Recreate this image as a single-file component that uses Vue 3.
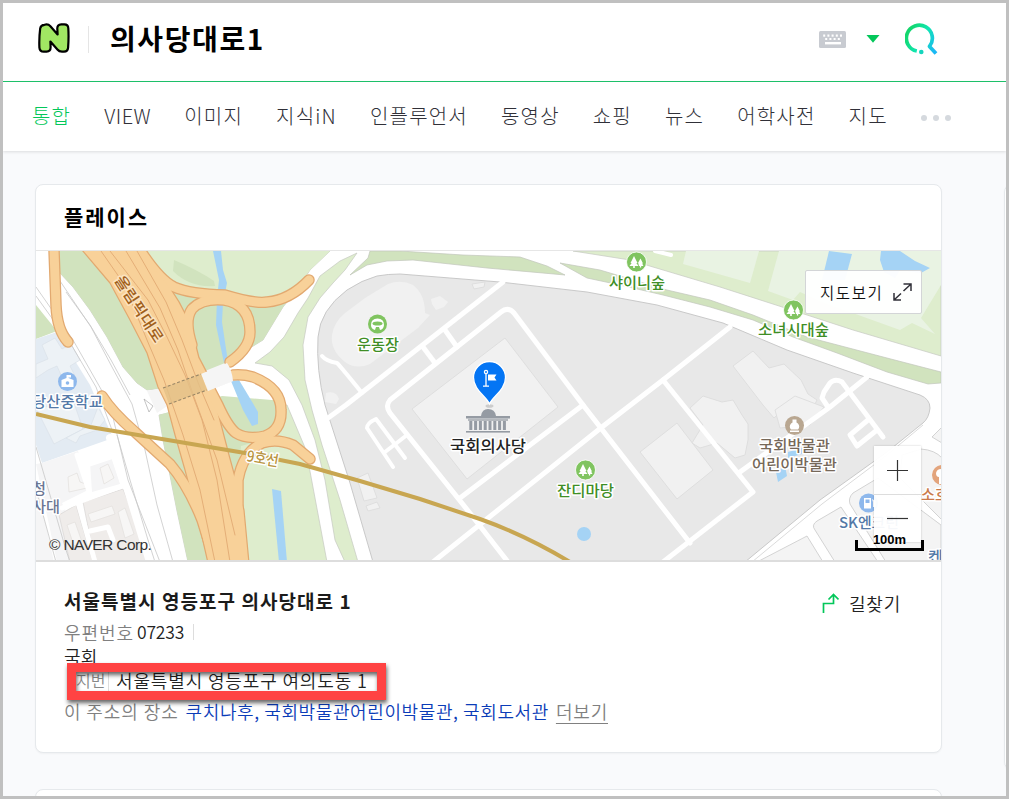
<!-- App.vue: 통합검색 결과 - 플레이스 카드 -->
<template>
  <div class="page">
    <header class="search-bar">
      <svg class="logo" width="34" height="32" viewBox="0 0 34 32">
        <path
          d="M6.5 1.8 C8.8 1 10.8 1.5 12.4 3.2 L19.6 11.4 L19.3 5.6 C19.2 2.8 20.8 1.4 23.2 1.3 L26 1.3 C28.8 1.2 30.2 2.6 30.3 5.2 C30.7 11.5 30.6 18 30.1 24.6 C29.9 27.2 28.5 28.5 26 28.6 L24 28.6 C22 28.6 20.6 28 19.4 26.5 L12.4 18.6 L12.6 24 C12.7 27 11.3 28.6 8.6 28.7 L6 28.7 C3 28.8 1.6 27.2 1.4 24.6 C1.1 18 1.4 11.6 2.2 5.4 C2.6 3.2 4 1.9 6.5 1.8 Z"
          fill="#a1e763" stroke="#000" stroke-width="2.2" stroke-linejoin="round"
        />
      </svg>
      <span class="divider"></span>
      <div class="query">{{ query }}</div>
      <svg class="keyboard" width="27" height="17" viewBox="0 0 27 17">
        <rect width="27" height="17" rx="1.5" fill="#c8cbd1" />
        <g fill="#fff">
          <rect v-for="n in 5" :key="'a' + n" :x="4.2 * n" y="3.5" width="2" height="2.2" />
          <rect v-for="n in 4" :key="'b' + n" :x="2 + 4.2 * n" y="7" width="2" height="2" />
          <rect x="6" y="11" width="16" height="2.4" />
        </g>
      </svg>
      <svg class="caret" width="14" height="8" viewBox="0 0 14 8">
        <path d="M0.5 0 H13.5 L7 7.8 Z" fill="#03c75a" />
      </svg>
      <svg class="search" width="34" height="34" viewBox="0 0 34 34">
        <defs>
          <linearGradient id="searchGrad" x1="0" y1="0.3" x2="1" y2="0.8">
            <stop offset="0" stop-color="#13d66b" />
            <stop offset="0.5" stop-color="#10e6b0" />
            <stop offset="1" stop-color="#1bb8f5" />
          </linearGradient>
        </defs>
        <path d="M11.8 28 A13 13 0 1 1 24.5 23.4 L31 30.6" fill="none" stroke="url(#searchGrad)" stroke-width="3.7" stroke-linejoin="round" />
        <circle cx="16.3" cy="29" r="2.3" fill="#14d5bd" />
      </svg>
    </header>

    <nav class="tabs">
      <a v-for="tab in tabs" :key="tab" class="tab" :class="{ active: tab === activeTab, latin: tab === 'VIEW' }" @click="activeTab = tab">{{ tab }}</a>
      <span class="more"><i></i><i></i><i></i></span>
    </nav>

    <main class="content">
      <div class="main-col">
        <section class="card place">
          <h2 class="card-title">플레이스</h2>

          <div class="map">
            <svg class="map-canvas" width="905" height="311" viewBox="36 251 905 311">
              <rect x="36" y="251" width="905" height="311" fill="#fff" />

              <!-- 녹지 -->
              <g fill="#deedcd" stroke="#c6c9c1" stroke-width="0.7">
                <path d="M58 251 L59 272 73 287 90 310 107 337 123 367 137 383 147 390 163 388 200 373 227 363 250 348 263 340 283 307 297 290 310 270 330 251Z" />
                <path d="M255 363 L270 352 284 337 298 313 308 298 320 276 340 261 357 253 345 270 333 283 320 298 308 317 303 345 305 380 312 410 322 445 340 500 358 562 345 562 335 540 325 480 315 440 302 405 289 380 272 366Z" />
                <path d="M159 415 L222 402 287 405 306 450 327 562 188 562 177 511 163 440Z" />
                <path d="M573 251 L630 260 653 267 720 287 807 315 853 330 941 356 941 251Z" />
              </g>
              <path d="M36 305 L57 331 36 339Z" fill="#d1e3be" />
              <g fill="#d1e3be">
                <path d="M58 251 L59 272 73 287 90 310 107 337 123 367 137 383 147 390 163 388 200 373 227 363 250 348 263 340 280 312 290 296 250 305 200 293 155 272 130 251Z" />
                <path d="M159 415 L222 396 284 401 280 425 262 440 241 446 231 562 188 562 177 511 163 440Z" />
              </g>
              <path d="M142 251 L330 251 310 270 290 296 262 303 240 298 225 292 185 290 165 278Z" fill="#deedcd" />
              <path d="M142 251 L147 253 158 267 157 272Z" fill="#fff" />
              <path d="M174 260 Q198 270 214 281 L215 286 Q190 288 173 271Z" fill="#d1e3be" />
              <g fill="#d1e3be" stroke="#c2c6bb" stroke-width="0.7">
                <path d="M370 251 L400 251 463 255 520 257 547 266 565 275 487 268 413 260 387 261 367 265 350 275 368 258Z" />
                <path d="M560 263 L600 270 667 290 710 300 753 315 807 337 887 358 941 372 941 383 928 384 887 372 837 353 793 337 753 320 710 307 663 295 620 285 587 278Z" />
              </g>
              <path d="M655 251 L671 255" stroke="#fff" stroke-width="4" stroke-linecap="round" />
              <g fill="#e9f3e3">
                <path d="M686 251 L683 264 750 283 759 251Z" />
                <path d="M779 251 L768 291 793 300 800 292 825 303 900 330 912 323 935 334 921 318 941 285 941 251Z" />
              </g>

              <!-- 물 -->
              <g fill="#a5d3f5">
                <path d="M213 251 L221 251 223 270 227 283 223 303 222 322 228 362 224 363 216 325 217 299 219 280Z" />
                <path d="M231 381 L239 380 251 400 258 412 258 424 252 426 243 410Z" />
                <path d="M272 489 L281 491 287 562 279 562Z" />
                <path d="M829 251 L852 254 845 280 822 280Z" />
                <path d="M881 251 L900 251 915 261 930 268 921 273 900 270 895 278 884 272 880 260Z" />
              </g>

              <!-- 좌측 블록 -->
              <path d="M36 339 L57 332 90 385 113 438 42 463 36 445Z" fill="#e3ebf3" />
              <g fill="#edf2f6" stroke="#dae1e8" stroke-width="0.7">
                <path d="M42 345 L55 338 62 349 71 344 80 360 70 366 76 378 64 382 57 366 48 370 36 378 36 364 48 359Z" />
                <path d="M36 408 L54 444 83 429 74 403Z" />
                <path d="M66 438 L91 425 98 407 105 420 97 430 80 436 76 443Z" />
              </g>
              <path d="M36 464 L42 463 78 451 88 490 62 503 88 562 57 562Z M36 480 L54 562 36 562Z" fill="#f5f5f6" />
              <path d="M90 463 L111 457 120 484 92 492Z" fill="#f5f5f6" />
              <g fill="#efecea" stroke="#d9d6d4" stroke-width="0.7">
                <path d="M59 515 L76 505 93 562 70 562Z" />
                <path d="M83 502 L123 489 153 562 95 562Z" />
              </g>
              <g fill="#f7f6f5" stroke="#e3dfdd" stroke-width="0.7">
                <path d="M88 514 L112 506 115 514 91 522Z" />
                <path d="M118 512 L125 508 134 534 125 538Z" />
                <path d="M67 525 L75 522 82 542 74 546Z" />
                <path d="M68 477 L77 473 80 482 86 484 87 488 69 492Z" />
                <path d="M100 468 L108 464 114 478 104 484Z" />
              </g>
              <g fill="none" stroke="#fff" stroke-width="5" stroke-linecap="round" stroke-linejoin="round">
                <path d="M77 455 L90 494 M62 508 L125 485 M78 502 L95 562 M90 464 L114 456 M87 456 L97 452 M90 531 L108 527 113 540" />
                <path d="M110 438 L128 490 150 562" stroke-width="8" />
              </g>
              <g fill="none" stroke="#c8c8c8" stroke-width="0.8">
                <path d="M36 287 L73 340 110 405 128 480 160 562" />
                <path d="M36 296 L72 346 96 387 112 430" />
                <path d="M60 281 L91 327 112 367 132 404 145 450 157 505 173 562" />
                <path d="M66 292 L90 325 111 360 130 395" />
                <path d="M117 435 L130 480 148 540 155 562" />
                <path d="M36 447 L66 550 70 562 M36 489 L56 562" />
              </g>
              <path d="M144 399 l9 7 l-4 6Z" fill="#fff" stroke="#aaa" stroke-width="0.7" />
              <path d="M147 391 L163 388 200 373 225 363 233 381 208 391 170 404 157 413Z" fill="#f5f5f5" />

              <!-- 도시고속도로 -->
              <g fill="none" stroke-linecap="round" stroke-linejoin="round">
                <g stroke="#e2a970" stroke-width="11.5">
                  <path v-for="(d, i) in ramps" :key="'o' + i" :d="d" />
                </g>
                <path d="M82 250 L110 283 130 320 147 353 158 387 167 405 175 435 185 470 197 515 208 563 249 563 244 510 229 455 216 405 205 375 190 345 175 308 160 280 142 250Z" fill="#f8d199" stroke="#e2a970" stroke-width="1.2" />
                <g stroke="#f8d199" stroke-width="9">
                  <path v-for="(d, i) in ramps" :key="'i' + i" :d="d" />
                </g>
                <g stroke="#e4ae77" stroke-width="1">
                  <path d="M101 251 L124 284 147 340 164 380 183 435 200 490 215 562" />
                  <path d="M110 251 L148 300 167 337 185 375 202 420 217 480 230 562" />
                  <path d="M126 251 L160 308 178 350 194 397 217 460 235 535" />
                  <path d="M137 251 L166 302 182 340 199 385 214 420" />
                </g>
              </g>
              <path d="M201 374 L227 363 Q232 370 233 381 L208 391Z" fill="#f5f5f5" />
              <path d="M163 388 L201 374 207 390 169 404Z" fill="#e4c087" opacity="0.8" />
              <path d="M163 388 L201 374 M169 404 L207 390" fill="none" stroke="#9a8767" stroke-width="1.1" stroke-dasharray="3 2" />

              <!-- 국회 부지 -->
              <path
                d="M347 290 Q362 280 377 276 Q388 274 400 274 L500 282 587 292 630 300 657 305 723 323 787 350 853 373 920 395 Q930 399 930 408 Q929 418 923 423 L887 452 820 500 745 562 373 562 350 483 325 405 Q316 370 318 337 Q320 310 347 290Z"
                fill="#e8e8e8" stroke="#c4c4c4" stroke-width="0.9"
              />
              <path d="M923 425 L887 455 822 504 752 562" fill="none" stroke="#ccc" stroke-width="0.7" />
              <g fill="#f1f1f1" stroke="#dcdcdc" stroke-width="0.9" stroke-linejoin="round">
                <path d="M365 298 L388 284 Q401 279 413 285 Q425 294 425 313 L430 315 418 328 370 364 Q356 370 345 362 Q330 350 332 335 Q334 322 345 313Z" stroke="none" />
                <path d="M505 338 L558 407 467 479 412 409Z" />
                <path d="M677 423 L713 470 677 499 640 452Z" />
                <path d="M690 408 L703 396 722 402 733 400 742 415 748 424 748 440 745 455 735 458 717 443 700 448 692 443 703 425Z" />
                <path d="M753 351 L769 368 784 364 801 380 808 394 817 400 812 410 800 405 788 405 774 418 763 405 733 366Z" />
                <path d="M775 410 L795 396 824 407 810 425 780 428Z" />
                <path d="M431 299 L440 296 448 302 444 307 436 310 432 304Z" stroke="none" />
                <path d="M472 284 L485 282 484 287 474 289Z" />
                <path d="M357 478 L368 473 377 498 364 501Z M366 506 L377 502 380 508 368 511Z" />
                <path d="M326 393 Q336 390 339 399 L336 404 325 402Z" stroke="none" />
              </g>
              <g fill="none" stroke="#fff" stroke-width="5" stroke-linecap="round" stroke-linejoin="round">
                <path d="M503 282 L346 405 328 418" />
                <path d="M508 562 L473 517 390 413 Q385 406 390 400 L501 312 Q508 306 514 313 L583 405 690 543" />
                <path d="M460 498 L583 405" />
                <path d="M433 562 L602 427 663 380 730 327" />
                <path d="M663 380 L753 492 663 562" />
                <path d="M740 472 L830 407 867 377" />
                <path d="M883 437 L842 382 Q835 378 830 383 L824 392 822 398 828 407" />
                <path d="M868 420 L850 435 857 446 877 430" />
                <path d="M423 347 L435 363 M445 330 L457 347" />
                <path d="M322 356 Q326 361 337 363 Q341 367 362 393" stroke-width="4" />
                <path d="M393 467 L367 428 Q367 423 376 419 L405 458 M385 452 L407 435" stroke-width="4" />
              </g>
              <g fill="#a5d3f5">
                <circle cx="584" cy="534" r="7" />
                <path d="M776 472 L785 466 787 476 778 482Z M788 452 L802 448 802 454 788 458Z" />
              </g>

              <!-- 우측 하단 블록 -->
              <g fill="#f4f4f4" stroke="#c9c9c9" stroke-width="0.8">
                <path d="M757 562 L807 536 823 562Z" />
                <path d="M815 530 Q811 525 817 521 L841 507 878 562 835 562Z" />
                <path d="M850 504 Q848 498 853 493 L878 478 941 525 941 562 886 562Z" />
                <path d="M921 449 Q935 450 942 458 L942 520 900 478 902 455Z" />
                <path d="M942 427 L932 437 942 443Z" />
              </g>

              <!-- 9호선 -->
              <path d="M36 414 L90 427 150 437 245 453 300 464 360 481 420 499 480 519 Q525 535 570 562" fill="none" stroke="#c8a651" stroke-width="4" />

              <!-- 국회의사당 -->
              <g fill="#959ba3">
                <path d="M481 416 Q482 409 488 409 Q495 409 496 416Z" />
                <rect x="466" y="416" width="44" height="2.5" />
                <rect x="468" y="418.500" width="40" height="2.500" fill="#b4b8bd" />
                <rect v-for="n in 8" :key="'p' + n" :x="464.5 + n * 4.8" y="421" width="3" height="9" />
                <rect x="466" y="431" width="44" height="1.6" />
              </g>
              <ellipse cx="489.500" cy="406" rx="4" ry="1.800" fill="#ccc" />
              <path d="M489.500 404 C486 396 473.500 390 473.500 377.500 A16 16 0 0 1 505.500 377.500 C505.500 390 493 396 489.500 404Z" fill="#0475f4" stroke="#fff" stroke-width="1.300" />
              <g fill="none" stroke="#fff" stroke-width="1.300">
                <circle cx="486" cy="372" r="1.600" />
                <path d="M486 374 V386 M483 386.200 H489" />
              </g>
              <path d="M488 374.500 H496.500 L494.500 377.500 L496.500 380.500 H488Z" fill="#fff" />

              <!-- 지도 마커 -->
              <g v-for="m in trees" :key="m.x" :transform="`translate(${m.x} ${m.y})`">
                <circle r="10" fill="#80c460" stroke="#fff" stroke-width="0.800" />
                <path d="M-2.500 -6 L1 1 H-0.200 L2 4 H-1.700 V6 H-3.300 V4 H-7 L-4.800 1 H-6Z M4 -3.500 L6.500 1.500 H5.600 L7 4 H4.700 V5.500 H3.400 V4 H2.600 L1.600 0.800Z" fill="#fff" />
              </g>
              <circle cx="377.500" cy="324" r="9.500" fill="#80c460" />
              <path d="M371 325 Q371 318.500 377.500 318.500 Q384 318.500 384 325 Q383.500 329.500 380 330 L379 327 H376 L375 330 Q371 329 371 325Z" fill="#fff" />
              <ellipse cx="377.500" cy="323.500" rx="5" ry="2" fill="#80c460" />
              <circle cx="67.500" cy="381.500" r="9.500" fill="#8eb8ec" />
              <path d="M61.500 387 V380 L66.500 378 V375 H71 V377.500 H68.500 V378 L73.500 380 V387Z" fill="#fff" />
              <circle cx="67.500" cy="383" r="1.800" fill="#8eb8ec" />
              <circle cx="794.500" cy="425.500" r="9.500" fill="#b9a791" />
              <path d="M792.500 419.500 H796.500 V422.500 Q800 424.500 799 428 L798 429.500 H791 L790 428 Q789 424.500 792.500 422.500Z M790 430.500 H799 V432 H790Z" fill="#fff" />
              <circle cx="868.500" cy="503" r="9.500" fill="#8eb8ec" />
              <path d="M864 498 H871 V508.500 H864Z M872 499 L875.500 501 V507 H873 V502Z" fill="#fff" />
              <rect x="865.500" y="499.500" width="4" height="3.500" fill="#8eb8ec" />
              <circle cx="942" cy="475" r="10" fill="#e3a47c" />
              <path d="M936 473 Q937 469 941 469 V484 H939 V477 Q936 477 936 473Z" fill="#fff" />
              <circle cx="820" cy="569" r="9" fill="#b9a791" />

              <text v-for="l in labels" :key="l.text" class="map-label" :x="l.x" :y="l.y" :fill="l.color" :font-size="l.size || 15" :textLength="l.w" lengthAdjust="spacingAndGlyphs">{{ l.text }}</text>
              <text class="map-label road" transform="translate(114 280) rotate(57)" textLength="76" lengthAdjust="spacingAndGlyphs">올림픽대로</text>
              <text class="map-label line" transform="translate(246 461) rotate(10)" textLength="32" lengthAdjust="spacingAndGlyphs">9호선</text>
              <path d="M36 561 H941" stroke="#ddd" stroke-width="2" />
            </svg>

            <button class="view-map" type="button">
              지도보기
              <svg width="19" height="18" viewBox="0 0 19 18">
                <path d="M10.500 1 H18 V8 M17.500 1.500 L10.500 8 M1 10 V17 H8 M1.500 16.500 L8 10.500" fill="none" stroke="#303038" stroke-width="1.500" />
              </svg>
            </button>
            <div class="zoom">
              <button type="button"><svg width="21" height="21" viewBox="0 0 21 21"><path d="M0 10.500 H21 M10.500 0 V21" stroke="#333" stroke-width="1.200" /></svg></button>
              <button type="button"><svg width="21" height="21" viewBox="0 0 21 21"><path d="M0 10.500 H21" stroke="#333" stroke-width="1.200" /></svg></button>
            </div>
            <div class="scale">100m</div>
            <div class="copyright">© NAVER Corp.</div>
          </div>

          <div class="info">
            <div class="info-head">
              <strong class="address">서울특별시 영등포구 의사당대로 1</strong>
              <a class="route">
                <svg width="17" height="20" viewBox="0 0 17 20">
                  <path d="M1.500 20 V10.500 H11.500 V1.500 M6.500 6.500 L11.500 1.500 L16.500 6.500" fill="none" stroke="#03c75a" stroke-width="1.700" />
                </svg>
                <span>길찾기</span>
              </a>
            </div>
            <div class="zip"><span class="muted zip-label">우편번호</span><span class="zip-code">07233</span></div>
            <div class="name">국회</div>
            <div class="jibun">
              <span class="tag">지번</span><span class="jibun-text">서울특별시 영등포구 여의도동 1</span>
              <div class="highlight"></div>
            </div>
            <div class="places">
              <span class="muted">이 주소의 장소</span>
              <span class="links">쿠치나후, 국회박물관어린이박물관, 국회도서관</span>
              <a class="more-link">더보기</a>
            </div>
          </div>
        </section>
        <section class="card next"></section>
      </div>
      <aside class="card side"></aside>
    </main>
  </div>
</template>

<script setup>
import { ref } from 'vue';

const query = ref('의사당대로1');
const tabs = ['통합', 'VIEW', '이미지', '지식iN', '인플루언서', '동영상', '쇼핑', '뉴스', '어학사전', '지도'];
const activeTab = ref('통합');

// 고속도로 진출입 램프
const ramps = [
  'M54 250 L56 305 Q57 330 68 342',
  'M142 253 Q160 280 174 287 Q190 294 225 295 Q255 304 267 302 Q290 300 309 280',
  'M155 276 Q178 305 187 331 L194 359 205 380 218 405 Q228 427 236 433 Q247 440 265 436 Q282 430 281 410 Q281 388 253 377 Q243 374 233 375',
  'M192 345 Q184 320 192 309 Q202 298 224 300 Q250 304 250 332 Q250 348 230 362',
  'M102 396 Q112 412 135 432 L170 464 Q188 485 202 520 L215 562',
  'M310 459 L293 445 Q277 438 262 443 Q243 452 238 480 L238 562'
];

const trees = [
  { x: 636.500, y: 262 },
  { x: 793.500, y: 310 },
  { x: 585.500, y: 470 }
];

const labels = [
  { text: '샤이니숲', x: 609, y: 288, w: 56, color: '#3f8e25' },
  { text: '소녀시대숲', x: 758, y: 335, w: 71, color: '#3f8e25' },
  { text: '운동장', x: 357, y: 350, w: 42, color: '#3f8e25' },
  { text: '잔디마당', x: 557, y: 496, w: 57, color: '#3f8e25' },
  { text: '국회의사당', x: 450, y: 452, w: 76, color: '#222', size: 16 },
  { text: '국회박물관', x: 759, y: 451, w: 71, color: '#766859' },
  { text: '어린이박물관', x: 752, y: 470, w: 85, color: '#766859' },
  { text: '당산중학교', x: 32, y: 407, w: 71, color: '#5479a7' },
  { text: '청', x: 32, y: 494, w: 14, color: '#6c7693' },
  { text: '사대', x: 32, y: 512, w: 28, color: '#6c7693' },
  { text: 'SK엔크린', x: 839, y: 528, w: 60, color: '#5479a7' },
  { text: '소호', x: 921, y: 500, w: 28, color: '#ca7a4b' },
  { text: '켄', x: 928, y: 562, w: 15, color: '#5479a7' }
];
</script>

<style>
body {
  margin: 0;
}
</style>

<style scoped>
.page {
  box-sizing: border-box;
  width: 1009px;
  height: 799px;
  border: 3px solid #c0c0c0;
  overflow: hidden;
  background: #f9fafc;
  color: #222;
  font-family: "Noto Sans CJK KR", "Noto Sans", sans-serif;
  display: flex;
  flex-direction: column;
}

.search-bar {
  height: 78px;
  flex: none;
  background: #fff;
  border-bottom: 1px solid #1ec46c;
  display: flex;
  align-items: center;
  box-sizing: content-box;
  padding-left: 35px;
}

.logo { margin-top: -6px; }
.divider { width: 1px; height: 27px; background: #e5e5e5; margin: -6px 21px 0 16px; }
.query {
  width: 709px;
  margin-top: -8px;
  color: #000;
  font-size: 28px;
  font-weight: 700;
  line-height: 40px;
  letter-spacing: 1.6px;
}
.keyboard { margin-top: -5px; }
.caret { margin: -6px 0 0 20px; }
.search { margin: -4px 0 0 25px; }

.tabs {
  height: 69px;
  flex: none;
  box-sizing: border-box;
  background: #fff;
  box-shadow: 0 1px 3px rgba(0, 0, 0, 0.12);
  display: flex;
  align-items: center;
  gap: 33px;
  padding: 0 0 2px 29px;
  z-index: 1;
}

.tab {
  color: #303038;
  font-size: 20px;
  font-weight: 300;
  letter-spacing: 1.2px;
  white-space: nowrap;
  cursor: pointer;
}
.tab.active { color: #03c75a; }
.tab.latin { letter-spacing: 0.5px; }

.more { display: flex; gap: 6px; margin-top: 5px; }
.more i { width: 6px; height: 6px; border-radius: 50%; background: #d5d9de; }

.content {
  display: flex;
  gap: 62px;
  padding: 33px 0 0 32px;
}

.main-col {
  width: 907px;
  flex: none;
  display: flex;
  flex-direction: column;
  gap: 36px;
}

.card {
  box-sizing: border-box;
  background: #fff;
  border: 1px solid #e6e9ec;
  border-radius: 8px;
  box-shadow: 0 1px 2px rgba(0, 0, 0, 0.04);
}

.place { height: 569px; overflow: hidden; }
.next { height: 80px; }
.side { width: 300px; height: 586px; flex: none; }

.card-title {
  margin: 0;
  height: 65px;
  padding-left: 28px;
  border-bottom: 1px solid #e6e6e6;
  color: #000;
  font-size: 21px;
  font-weight: 700;
  line-height: 63px;
  letter-spacing: 1.9px;
}

.map { position: relative; height: 311px; overflow: hidden; }
.map-canvas { display: block; }

.map-label {
  font-weight: 500;
  paint-order: stroke;
  stroke: #fff;
  stroke-width: 3px;
  stroke-linejoin: round;
}
.map-label.road { fill: #a0601c; stroke: #fce3bf; font-size: 15px; }
.map-label.line { fill: #b99440; font-size: 15px; }

.view-map {
  position: absolute;
  top: 19px;
  right: 19px;
  width: 117px;
  height: 44px;
  padding: 0 9px 0 14px;
  display: flex;
  align-items: center;
  justify-content: space-between;
  background: rgba(255, 255, 255, 0.95);
  border: 1px solid #d3d5d7;
  border-radius: 2px;
  color: #111;
  font-family: inherit;
  font-size: 15.5px;
  font-weight: 350;
  letter-spacing: 1.6px;
  white-space: nowrap;
}

.zoom {
  position: absolute;
  right: 20px;
  top: 195px;
  width: 47px;
  display: flex;
  flex-direction: column;
  background: rgba(255, 255, 255, 0.95);
  box-shadow: 0 0 2px rgba(0, 0, 0, 0.2);
}
.zoom button {
  height: 48px;
  padding: 0;
  border: none;
  background: transparent;
  display: flex;
  align-items: center;
  justify-content: center;
}
.zoom button + button { border-top: 1px solid #ddd; }

.scale {
  position: absolute;
  left: 819px;
  top: 280px;
  box-sizing: border-box;
  width: 69px;
  height: 20px;
  color: #000;
  font: 700 13px/17px "Liberation Sans", sans-serif;
  text-align: center;
}
.scale::after {
  content: '';
  position: absolute;
  left: 0;
  right: 0;
  bottom: 0;
  height: 8px;
  border: 3px solid #000;
  border-top: none;
}

.copyright {
  position: absolute;
  left: 13px;
  top: 284px;
  color: #333;
  font: 15.5px/20px "Liberation Sans", sans-serif;
  letter-spacing: -0.62px;
  white-space: nowrap;
}

.info { padding: 23px 40px 0 28px; font-size: 18px; font-weight: 350; }
.info-head { display: flex; justify-content: space-between; align-items: center; height: 31px; }
.address { color: #1b1b1b; font-size: 19px; font-weight: 700; letter-spacing: 1.05px; }
.route { display: flex; align-items: center; gap: 10px; font-size: 18px; letter-spacing: 0.8px; margin-top: 4px; }
.muted { color: #808080; }
.zip { display: flex; align-items: center; height: 32px; line-height: 32px; }
.zip-label { width: 73px; letter-spacing: 0.9px; }
.zip-code { width: 56px; line-height: 16px; font-size: 17.5px; letter-spacing: -0.2px; border-right: 1px solid #ddd; }
.name { height: 16px; line-height: 16px; letter-spacing: 0.3px; }

.jibun { position: relative; display: flex; align-items: center; height: 30px; padding-left: 12px; margin-top: 2px; }
.tag { width: 32px; height: 19px; line-height: 17px; font-size: 16px; color: #888; border-right: 1px solid #ddd; }
.jibun-text { margin: -2px 0 0 7px; letter-spacing: 0.85px; white-space: nowrap; }
.highlight {
  position: absolute;
  left: 3px;
  top: -3px;
  box-sizing: border-box;
  width: 319px;
  height: 37px;
  border: 9px solid #ff4343;
  filter: drop-shadow(1px 3px 2px rgba(0, 0, 0, 0.6));
}

.places { display: flex; gap: 7px; height: 30px; line-height: 30px; white-space: nowrap; }
.places .muted { letter-spacing: 0.9px; }
.links { color: #0b3cb8; letter-spacing: 0.6px; }
.more-link { color: #808080; text-decoration: underline; text-underline-offset: 4px; letter-spacing: 0.8px; }
</style>
